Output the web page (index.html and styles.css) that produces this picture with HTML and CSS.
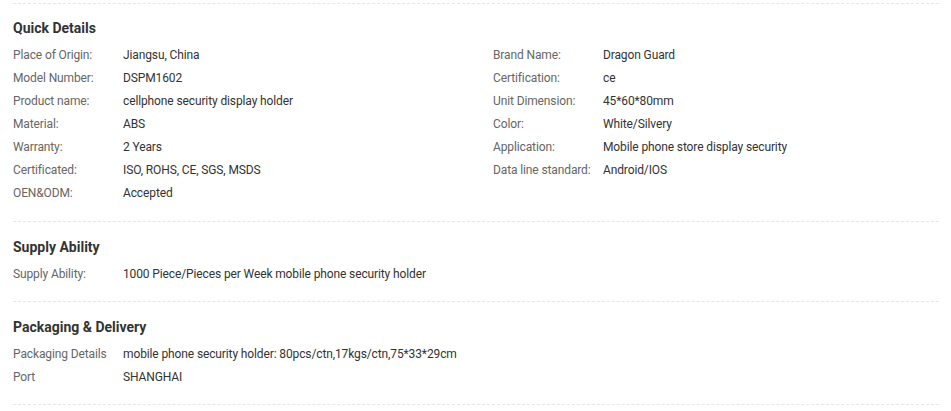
FILE: index.html
```html
<!DOCTYPE html>
<html>
<head>
<meta charset="utf-8">
<link rel="stylesheet" href="styles.css">
</head>
<body>
<div class="details">
  <section class="block first">
    <h3 class="block-title">Quick Details</h3>
    <div class="grid two">
      <div class="col">
        <div class="row"><span class="label">Place of Origin:</span><span class="value">Jiangsu, China</span></div>
        <div class="row"><span class="label">Model Number:</span><span class="value">DSPM1602</span></div>
        <div class="row"><span class="label">Product name:</span><span class="value">cellphone security display holder</span></div>
        <div class="row"><span class="label">Material:</span><span class="value">ABS</span></div>
        <div class="row"><span class="label">Warranty:</span><span class="value">2 Years</span></div>
        <div class="row"><span class="label">Certificated:</span><span class="value">ISO, ROHS, CE, SGS, MSDS</span></div>
        <div class="row"><span class="label">OEN&amp;ODM:</span><span class="value">Accepted</span></div>
      </div>
      <div class="col">
        <div class="row"><span class="label">Brand Name:</span><span class="value">Dragon Guard</span></div>
        <div class="row"><span class="label">Certification:</span><span class="value">ce</span></div>
        <div class="row"><span class="label">Unit Dimension:</span><span class="value">45*60*80mm</span></div>
        <div class="row"><span class="label">Color:</span><span class="value">White/Silvery</span></div>
        <div class="row"><span class="label">Application:</span><span class="value">Mobile phone store display security</span></div>
        <div class="row"><span class="label">Data line standard:</span><span class="value">Android/IOS</span></div>
      </div>
    </div>
  </section>
  <section class="block">
    <h3 class="block-title">Supply Ability</h3>
    <div class="row"><span class="label">Supply Ability:</span><span class="value">1000 Piece/Pieces per Week mobile phone security holder</span></div>
  </section>
  <section class="block last">
    <h3 class="block-title">Packaging &amp; Delivery</h3>
    <div class="row"><span class="label">Packaging Details</span><span class="value">mobile phone security holder: 80pcs/ctn,17kgs/ctn,75*33*29cm</span></div>
    <div class="row"><span class="label">Port</span><span class="value">SHANGHAI</span></div>
  </section>
</div>
</body>
</html>
```

FILE: styles.css
```css
html, body {
  margin: 0;
  padding: 0;
  background: #fff;
}
body {
  font-family: Roboto, "Liberation Sans", Arial, sans-serif;
  font-size: 12px;
  color: #333;
}
.details {
  width: 926px;
  margin-left: 13px;
  padding-top: 3px;
}
.block {
  border-top: 1px dashed #e6e6e6;
  padding: 15px 0 15px;
}
.block.first {
  padding: 14px 0 16px;
}
.block.last {
  border-bottom: 1px dashed #e6e6e6;
}
.block-title {
  margin: 0 0 6px;
  font-size: 14px;
  line-height: 20px;
  font-weight: bold;
  color: #333;
}
.grid.two {
  display: grid;
  grid-template-columns: 480px 1fr;
}
.row {
  display: flex;
  line-height: 23px;
  height: 23px;
  letter-spacing: -0.12px;
}
.label {
  width: 110px;
  flex: none;
  color: #666;
}
.value {
  color: #333;
}
```
